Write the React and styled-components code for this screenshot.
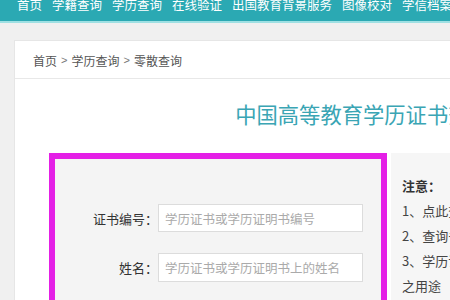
import React from 'react';
import styled, { createGlobalStyle } from 'styled-components';

const GlobalStyle = createGlobalStyle`
  html, body {
    margin: 0;
    padding: 0;
    background: #f0f0f0;
    overflow: hidden;
  }
  body {
    font-family: "Noto Sans CJK SC", "Noto Sans", sans-serif;
  }
`;

const NavBar = styled.div`
  height: 21px;
  background: #2ba9b3;
  border-bottom: 2px solid #9fe0e3;
  overflow: hidden;
`;
const NavList = styled.ul`
  display: flex;
  gap: 10px;
  margin: -2px 0 0;
  padding: 0 0 0 17px;
  list-style: none;
  white-space: nowrap;
`;
const NavItem = styled.li`
  color: #fff;
  font-size: 12.5px;
  line-height: 13px;
`;

const Page = styled.div`
  padding: 17px 0 0 14px;
`;
const Panel = styled.div`
  width: 696px;
  background: #fff;
  border: 1px solid #e6e6e6;
`;
const Breadcrumb = styled.div`
  height: 36px;
  padding-left: 18px;
  display: flex;
  align-items: center;
  border-bottom: 1px solid #e8e8e8;
  font-size: 12px;
  color: #555;
  padding-top: 1px;
`;
const Sep = styled.span`
  margin: 0 4px;
  color: #777;
  font-family: "Liberation Sans", sans-serif;
  font-size: 11px;
`;
const Title = styled.h1`
  margin: 19px 0 0;
  font-size: 21.3px;
  line-height: 31px;
  font-weight: normal;
  color: #3aa5b4;
  text-align: center;
`;
const Body = styled.div`
  display: flex;
  gap: 4px;
  margin-top: 24px;
  padding-left: 34px;
`;
const FormBox = styled.div`
  width: 326px;
  height: 160px;
  border: 6px solid #e41fe6;
  background: #f4f4f4;
  padding-top: 45px;
  display: flex;
  flex-direction: column;
  gap: 21px;
`;
const Row = styled.div`
  display: flex;
  align-items: center;
`;
const Label = styled.label`
  width: 103px;
  text-align: right;
  font-size: 13px;
  color: #333;
`;
const Input = styled.input`
  box-sizing: border-box;
  width: 205px;
  height: ${p => p.$h}px;
  border: 1px solid #dcdcdc;
  background: #fff;
  padding: 0 6px;
  font-family: "Noto Sans CJK SC", sans-serif;
  font-size: 12.5px;
  outline: none;
  &::placeholder {
    color: #aaa;
  }
`;
const Notice = styled.div`
  flex: 1;
  background: #f6f6f6;
  padding: 20px 0 0 11px;
  font-size: 13px;
  line-height: 25px;
  color: #444;
  white-space: nowrap;
`;
const NoticeHead = styled.div`
  font-weight: bold;
  color: #333;
`;

const navItems = ['首页', '学籍查询', '学历查询', '在线验证', '出国教育背景服务', '图像校对', '学信档案'];

export default function App() {
  return (
    <>
      <GlobalStyle />
      <NavBar>
        <NavList>
          {navItems.map(t => <NavItem key={t}>{t}</NavItem>)}
        </NavList>
      </NavBar>
      <Page>
        <Panel>
          <Breadcrumb>
            首页<Sep>&gt;</Sep>学历查询<Sep>&gt;</Sep>零散查询
          </Breadcrumb>
          <Title>中国高等教育学历证书查询</Title>
          <Body>
            <FormBox>
              <Row>
                <Label>证书编号：</Label>
                <Input $h={28} placeholder="学历证书或学历证明书编号" />
              </Row>
              <Row>
                <Label>姓名：</Label>
                <Input $h={29} placeholder="学历证书或学历证明书上的姓名" />
              </Row>
            </FormBox>
            <Notice>
              <NoticeHead>注意：</NoticeHead>
              <div>1、点此查看学历证书样本</div>
              <div>2、查询书编号为学历证书上的编号</div>
              <div>3、学历证书查询结果仅供参考，不作其他</div>
              <div>之用途</div>
            </Notice>
          </Body>
        </Panel>
      </Page>
    </>
  );
}
